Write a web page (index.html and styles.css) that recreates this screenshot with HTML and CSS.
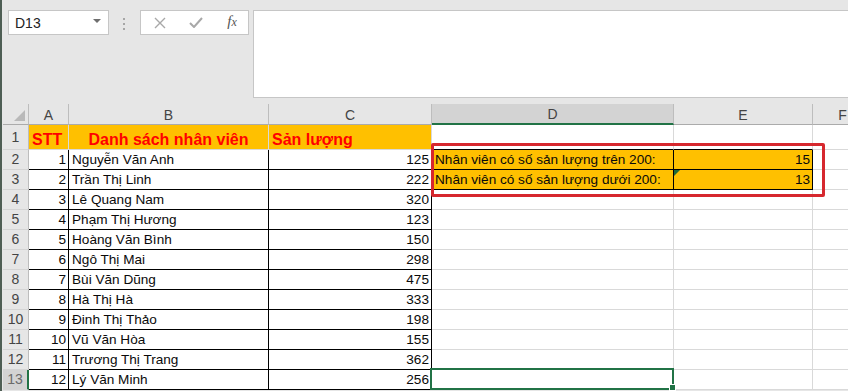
FILE: index.html
```html
<!DOCTYPE html>
<html lang="vi">
<head>
  <meta charset="UTF-8">
  <meta name="viewport" content="width=device-width, initial-scale=1">
  <title>Sản lượng nhân viên</title>
  <link rel="stylesheet" href="styles.css">
</head>
<body>
  <div class="window">
    <!-- name box + formula bar -->
    <div class="formula-bar">
      <div class="name-box"><span>D13</span><span class="arrow"></span></div>
      <div class="grip"><i></i><i></i><i></i></div>
      <div class="fx-buttons">
        <svg width="12" height="12" viewBox="0 0 12 12"><path d="M1 1 L11 11 M11 1 L1 11" stroke="#a8a8a8" stroke-width="1.4" fill="none"/></svg>
        <svg width="14" height="11" viewBox="0 0 14 11"><path d="M1 6 L5 10 L13 1" stroke="#a8a8a8" stroke-width="2" fill="none"/></svg>
        <span class="fx">f<span>x</span></span>
      </div>
      <div class="formula-input"></div>
    </div>

    <div class="sheet">
      <table class="grid">
        <colgroup>
          <col class="c-row"><col class="c-a"><col class="c-b"><col class="c-c"><col class="c-d"><col class="c-e"><col class="c-f">
        </colgroup>
        <thead>
          <tr>
            <th class="corner"><span class="tri"></span></th>
            <th>A</th><th>B</th><th>C</th><th class="active">D</th><th>E</th><th>F</th>
          </tr>
        </thead>
        <tbody>
          <tr class="r1">
            <th>1</th>
            <td class="title">STT</td>
            <td class="title center">Danh sách nhân viên</td>
            <td class="title last">Sản lượng</td>
            <td></td><td></td><td></td>
          </tr>
          <tr>
            <th>2</th><td class="b num">1</td><td class="b">Nguyễn Văn Anh</td><td class="b num">125</td>
            <td class="b fill">Nhân viên có số sản lượng trên 200:</td><td class="b fill num">15</td><td></td>
          </tr>
          <tr>
            <th>3</th><td class="b num">2</td><td class="b">Trần Thị Linh</td><td class="b num">222</td>
            <td class="b fill">Nhân viên có số sản lượng dưới 200:</td><td class="b fill num note">13</td><td></td>
          </tr>
          <tr><th>4</th><td class="b num">3</td><td class="b">Lê Quang Nam</td><td class="b num">320</td><td></td><td></td><td></td></tr>
          <tr><th>5</th><td class="b num">4</td><td class="b">Phạm Thị Hương</td><td class="b num">123</td><td></td><td></td><td></td></tr>
          <tr><th>6</th><td class="b num">5</td><td class="b">Hoàng Văn Bình</td><td class="b num">150</td><td></td><td></td><td></td></tr>
          <tr><th>7</th><td class="b num">6</td><td class="b">Ngô Thị Mai</td><td class="b num">298</td><td></td><td></td><td></td></tr>
          <tr><th>8</th><td class="b num">7</td><td class="b">Bùi Văn Dũng</td><td class="b num">475</td><td></td><td></td><td></td></tr>
          <tr><th>9</th><td class="b num">8</td><td class="b">Hà Thị Hà</td><td class="b num">333</td><td></td><td></td><td></td></tr>
          <tr><th>10</th><td class="b num">9</td><td class="b">Đinh Thị Thảo</td><td class="b num">198</td><td></td><td></td><td></td></tr>
          <tr><th>11</th><td class="b num">10</td><td class="b">Vũ Văn Hòa</td><td class="b num">155</td><td></td><td></td><td></td></tr>
          <tr><th>12</th><td class="b num">11</td><td class="b">Trương Thị Trang</td><td class="b num">362</td><td></td><td></td><td></td></tr>
          <tr><th class="active">13</th><td class="b num">12</td><td class="b">Lý Văn Minh</td><td class="b num">256</td><td class="selected"><span class="handle"></span></td><td></td><td></td></tr>
        </tbody>
      </table>
      <div class="callout"></div>
    </div>
  </div>
</body>
</html>
```

FILE: styles.css
```css
body {
  margin: 0;
  background-color: #e6e6e6;
  font-family: "Liberation Sans", Arial, sans-serif;
  overflow: hidden;
}

.window {
  height: 391px;
  border-left: 2px solid #4e5e54;
  padding-left: 1px;
  overflow: hidden;
}

/* formula bar */
.formula-bar {
  display: flex;
  align-items: flex-start;
  height: 104px;
  padding-top: 10px;
  box-sizing: border-box;
}

.name-box {
  margin-left: 5px;
  width: 101px;
  height: 25px;
  box-sizing: border-box;
  background-color: #fff;
  border: 1px solid #c6c6c6;
  display: flex;
  align-items: center;
  justify-content: space-between;
  padding: 0 7px 0 6px;
  font-size: 14px;
  color: #222;
}

.arrow {
  border-left: 4px solid transparent;
  border-right: 4px solid transparent;
  border-top: 4px solid #6e6e6e;
  margin-top: -3px;
}

.grip {
  margin-left: 14px;
  margin-top: 8px;
  display: flex;
  flex-direction: column;
  gap: 3px;
}

.grip i {
  width: 2px;
  height: 2px;
  background-color: #a6a6a6;
}

.fx-buttons {
  margin-left: 15px;
  width: 109px;
  height: 25px;
  box-sizing: border-box;
  border: 1px solid #c6c6c6;
  background-color: #fff;
  display: grid;
  grid-template-columns: repeat(3, 36px);
  padding-left: 1px;
  align-items: center;
  justify-items: center;
}

.fx {
  font-family: "Liberation Serif", "Times New Roman", serif;
  font-style: italic;
  font-size: 15px;
  color: #555;
  margin-top: -2px;
}

.fx span {
  font-size: 12px;
}

.formula-input {
  margin-left: 4px;
  flex: 1;
  height: 86px;
  background-color: #fff;
  border: 1px solid #c6c6c6;
  border-right: none;
}

/* sheet */
.sheet {
  position: relative;
  background-color: #fff;
}

.grid {
  table-layout: fixed;
  border-collapse: separate;
  border-spacing: 0;
  width: 870px;
  font-size: 13.6px;
  color: #0a0a0a;
}

.c-row { width: 26px; }
.c-a { width: 40px; }
.c-b { width: 200px; }
.c-c { width: 163px; }
.c-d { width: 242px; }
.c-e { width: 139px; }
.c-f { width: 60px; }

.grid th,
.grid td {
  box-sizing: border-box;
  padding: 0 3px 1px;
  border-right: 1px solid #d9d9d9;
  border-bottom: 1px solid #d9d9d9;
  white-space: nowrap;
  overflow: hidden;
  vertical-align: bottom;
  line-height: 17px;
}

.grid tbody tr {
  height: 20px;
}

.grid thead tr {
  height: 21px;
}

.grid th {
  background-color: #e6e6e6;
  font-weight: normal;
  font-size: 14px;
  color: #444;
  text-align: center;
  vertical-align: middle;
  padding: 0;
  border-right-color: #bdbdbd;
  border-bottom-color: #d4d4d4;
}

.grid thead th {
  border-bottom-color: #ababab;
  padding-top: 2px;
}

.grid thead th.active {
  background-color: #d3d3d3;
  border-bottom: 2px solid #217346;
}

.grid tbody th.active {
  background-color: #d3d3d3;
  color: #6a6a6a;
  border-right: 2px solid #217346;
}

.corner {
  position: relative;
}

.corner .tri {
  position: absolute;
  right: 3px;
  bottom: 3px;
  border-left: 11px solid transparent;
  border-bottom: 11px solid #b9b9b9;
}

.grid tbody tr.r1 {
  height: 25px;
}

.title {
  background-color: #ffc000;
  color: #f00;
  font-weight: bold;
  font-size: 16px;
  line-height: 19px;
  border-right-color: #8c8c8c;
  border-bottom-color: #000;
}

.grid .b {
  border-right-color: #000;
  border-bottom-color: #000;
}

.r1 td:nth-child(5),
.r1 td:nth-child(6) {
  border-bottom-color: #000;
}

.center {
  text-align: center;
}

.num {
  text-align: right;
}

.grid td.num {
  padding-right: 2px;
}

.fill {
  background-color: #ffc000;
}

.note {
  position: relative;
}

.note::before {
  content: "";
  position: absolute;
  top: 0;
  left: 0;
  border-top: 6px solid #1f6b3a;
  border-right: 6px solid transparent;
}

.grid td.selected {
  position: relative;
  overflow: visible;
}

.selected::after {
  content: "";
  position: absolute;
  top: -2px;
  left: -2px;
  right: -1px;
  bottom: -1px;
  border: 2px solid #217346;
}

.handle {
  position: absolute;
  right: -3px;
  bottom: -2px;
  width: 5px;
  height: 5px;
  background-color: #217346;
  border: 1px solid #fff;
  z-index: 1;
}

.callout {
  position: absolute;
  left: 428px;
  top: 39px;
  width: 394px;
  height: 54px;
  box-sizing: border-box;
  border: 3px solid #d6282e;
  border-radius: 2px;
}
```
